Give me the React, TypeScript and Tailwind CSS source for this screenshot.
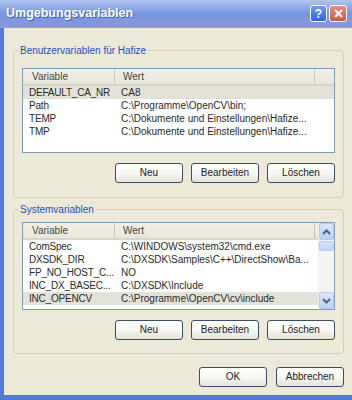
import React from 'react';

type Row = { name: string; value: string; selected?: boolean };

const userVars: Row[] = [
  { name: 'DEFAULT_CA_NR', value: 'CA8', selected: true },
  { name: 'Path', value: 'C:\\Programme\\OpenCV\\bin;' },
  { name: 'TEMP', value: 'C:\\Dokumente und Einstellungen\\Hafize...' },
  { name: 'TMP', value: 'C:\\Dokumente und Einstellungen\\Hafize...' },
];

const systemVars: Row[] = [
  { name: 'ComSpec', value: 'C:\\WINDOWS\\system32\\cmd.exe' },
  { name: 'DXSDK_DIR', value: 'C:\\DXSDK\\Samples\\C++\\DirectShow\\Ba...' },
  { name: 'FP_NO_HOST_C...', value: 'NO' },
  { name: 'INC_DX_BASEC...', value: 'C:\\DXSDK\\Include' },
  { name: 'INC_OPENCV', value: 'C:\\Programme\\OpenCV\\cv\\include', selected: true },
];

function XpButton({ label }: { label: string }) {
  return (
    <button className="w-[68px] h-[20px] rounded-[3px] border border-[#3d4c66] bg-linear-to-b from-white via-[#f7f7f3] to-[#e4e2d8] text-[10px] leading-none text-[#222]">
      {label}
    </button>
  );
}

function Chevron({ up }: { up?: boolean }) {
  return (
    <svg width="9" height="6" viewBox="0 0 9 6">
      <polyline
        points={up ? '1,5 4.5,1.5 8,5' : '1,1 4.5,4.5 8,1'}
        fill="none"
        stroke="#4d6185"
        strokeWidth="2"
      />
    </svg>
  );
}

function Scrollbar() {
  return (
    <div className="w-[16px] flex flex-col bg-[#f4f4f0] border-l border-[#eeede5]">
      <div className="h-[17px] flex items-center justify-center rounded-[2px] border border-[#b8cbf3] bg-linear-to-b from-[#dce6fd] to-[#bccff8]">
        <Chevron up />
      </div>
      <div className="h-[10px] mt-[1px] rounded-[2px] border border-[#b8cbf3] bg-linear-to-b from-[#d4e0fc] to-[#c4d5fa]" />
      <div className="flex-1" />
      <div className="h-[17px] flex items-center justify-center rounded-[2px] border border-[#b8cbf3] bg-linear-to-b from-[#dce6fd] to-[#bccff8]">
        <Chevron />
      </div>
    </div>
  );
}

function VarList({ rows, height, scroll }: { rows: Row[]; height: string; scroll?: boolean }) {
  return (
    <div className={`${height} flex border border-[#7f9db9] bg-white`}>
      <div className="flex-1 flex flex-col min-w-0">
        <div className="h-[17px] flex bg-linear-to-b from-[#f1f0e7] to-[#e8e7dc] border-b-2 border-[#d9d6c9] text-[#444]">
          <div className="w-[92px] pl-[9px] border-r border-[#c9c6b8] flex items-center">Variable</div>
          <div className="w-[200px] pl-[8px] border-r border-[#c9c6b8] flex items-center">Wert</div>
          <div className="flex-1" />
        </div>
        {rows.map((r) => (
          <div
            key={r.name}
            className={`h-[13px] flex leading-[13px] whitespace-nowrap text-[#2a2a2a] ${r.selected ? 'bg-[#e3e2d9]' : ''}`}
          >
            <div className="w-[93px] pl-[6px] tracking-[-0.2px]">{r.name}</div>
            <div className="pl-[5px]">{r.value}</div>
          </div>
        ))}
      </div>
      {scroll && <Scrollbar />}
    </div>
  );
}

export default function App() {
  return (
    <div className="w-[352px] h-[400px] flex flex-col bg-[#ece9d8] overflow-hidden font-['Liberation_Sans',Arial,sans-serif] text-[10px]">
      {/* title bar */}
      <div className="h-[28px] shrink-0 flex items-center pl-[6px] pr-[5px] bg-linear-to-b from-[#b1c4f1] via-[#7797df] to-[#8b96dc] border-b border-[#a09de0]">
        <span className="flex-1 text-white font-bold text-[12.5px] [text-shadow:1px_1px_0_#4262ad]">
          Umgebungsvariablen
        </span>
        <div className="flex gap-[2px]">
          <div className="w-[17px] h-[17px] rounded-[3px] border border-white bg-linear-to-b from-[#6f9cf5] to-[#2f63dc] flex items-center justify-center text-white font-bold text-[12px] leading-none">
            ?
          </div>
          <div className="w-[18px] h-[17px] rounded-[3px] border border-white bg-linear-to-b from-[#e58f7e] to-[#c9554a] flex items-center justify-center">
            <svg width="9" height="9" viewBox="0 0 9 9">
              <path d="M1 1L8 8M8 1L1 8" stroke="white" strokeWidth="2" />
            </svg>
          </div>
        </div>
      </div>

      {/* body */}
      <div className="flex-1 flex flex-col border-l-4 border-b-[5px] border-[#5579d6] pl-[9px] pr-[8px] pt-[16px]">
        <fieldset className="border border-[#d0cfbf] rounded-[4px]">
          <legend className="ml-[4px] px-[2px] leading-[13px] text-[#1f4fbf]">Benutzervariablen für Hafize</legend>
          <div className="px-[8px] pt-[11px] pb-[14px]">
            <VarList rows={userVars} height="h-[85px]" />
            <div className="mt-[10px] flex justify-end gap-[8px]">
              <XpButton label="Neu" />
              <XpButton label="Bearbeiten" />
              <XpButton label="Löschen" />
            </div>
          </div>
        </fieldset>

        <fieldset className="mt-[5px] border border-[#d0cfbf] rounded-[4px]">
          <legend className="ml-[4px] px-[2px] leading-[13px] text-[#1f4fbf]">Systemvariablen</legend>
          <div className="px-[8px] pt-[6px] pb-[13px]">
            <VarList rows={systemVars} height="h-[88px]" scroll />
            <div className="mt-[10px] flex justify-end gap-[8px]">
              <XpButton label="Neu" />
              <XpButton label="Bearbeiten" />
              <XpButton label="Löschen" />
            </div>
          </div>
        </fieldset>

        <div className="mt-[13px] flex justify-end gap-[9px]">
          <XpButton label="OK" />
          <XpButton label="Abbrechen" />
        </div>
      </div>
    </div>
  );
}
